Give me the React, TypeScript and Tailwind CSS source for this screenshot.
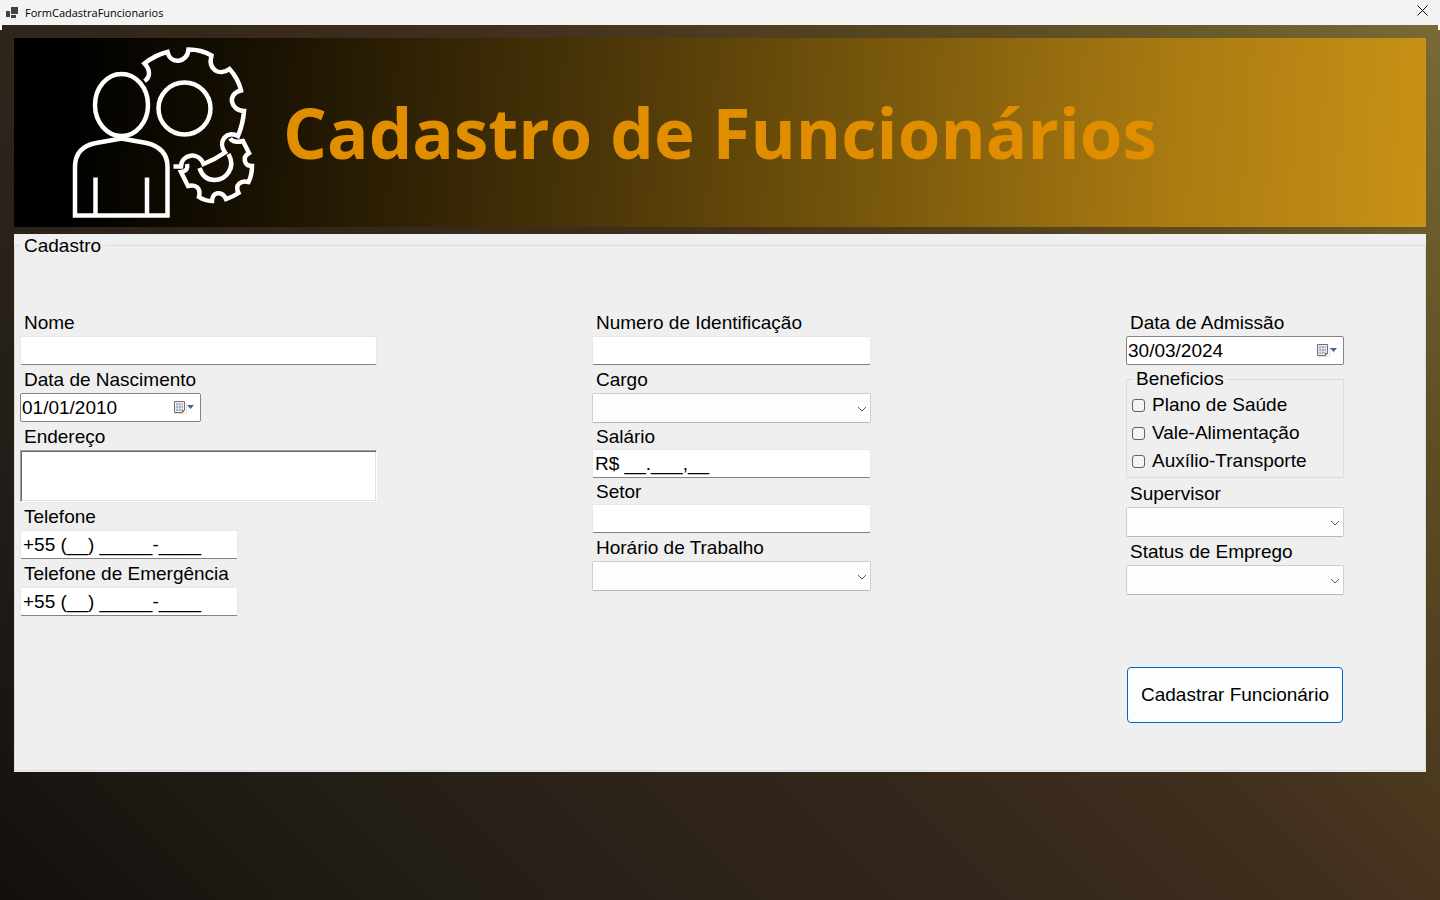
import type { ReactNode } from "react";

const boxText = "text-[19px] leading-6 text-black";

function Field({ id, label, compact = false, children }: { id: string; label: string; compact?: boolean; children: ReactNode }) {
  return (
    <div className="flex flex-col items-start">
      <label htmlFor={id} className={`flex items-center pt-px pl-1 text-[19px] leading-6 ${compact ? "h-[26px]" : "h-7"}`}>
        {label}
      </label>
      {children}
    </div>
  );
}

function TextBox({ id, value = "", width }: { id: string; value?: string; width: string }) {
  return (
    <input
      id={id}
      type="text"
      defaultValue={value}
      className={`h-[29px] rounded-xs border border-[#e8e8e8] border-b-[#828282] bg-white px-0.5 outline-none ${boxText} ${width}`}
    />
  );
}

function Combo({ id, width }: { id: string; width: string }) {
  return (
    <div className={`relative ${width}`}>
      <select
        id={id}
        defaultValue=""
        className={`block h-[30px] w-full appearance-none rounded-xs border border-[#cfcfcf] border-b-[#b8b8b8] bg-[#fdfdfd] px-1 outline-none ${boxText}`}
      >
        <option value=""></option>
      </select>
      <svg className="pointer-events-none absolute top-3 right-1 h-2 w-2.5" viewBox="0 0 10 8" fill="none" stroke="#606060">
        <path d="M1 2l4 4 4-4" />
      </svg>
    </div>
  );
}

function DateBox({ id, value, width }: { id: string; value: string; width: string }) {
  return (
    <div className={`flex h-[29px] items-center rounded-xs border border-[#848484] bg-white pr-1 ${width}`}>
      <input id={id} type="text" defaultValue={value} className={`h-6 w-0 min-w-0 flex-1 bg-transparent px-px outline-none ${boxText}`} />
      <button type="button" aria-label="Abrir calendário" className="shrink-0">
        <svg className="h-[15px] w-[23px]" viewBox="0 0 23 15">
          <path d="M2 13h11V4h1v9l-1 1H2z" fill="#e4dede" />
          <path d="M1.500 1.500h10v9l-2 2h-8z" fill="#f4f2f2" stroke="#7d6a68" />
          <rect x="3" y="3" width="7" height="8" fill="#a9b5ca" />
          <path d="M3 5.500h7M3 8.500h7M5.500 3v8M8.500 3v8" stroke="#e4e8f0" strokeWidth=".7" />
          <path d="M9 12.500v-2.500h2.500z" fill="#7d6a68" />
          <path d="M14 5h7l-3.500 4z" fill="#41619c" />
        </svg>
      </button>
    </div>
  );
}

function Check({ label }: { label: string }) {
  return (
    <label className="flex h-7 items-center gap-[7px] text-[19px] leading-6">
      <input type="checkbox" className="size-[13px] appearance-none rounded-[3px] border border-[#626262] bg-[#f4f4f4] checked:bg-[#0067c0]" />
      {label}
    </label>
  );
}

function EmployeeGears() {
  return (
    <svg className="h-[189px] w-[190px] shrink-0" viewBox="66 38 190 189" fill="none" stroke="#fff" strokeWidth="4.500">
      <ellipse cx="121.500" cy="105" rx="26.500" ry="31" />
      <path d="M121.500 138.500L96 143q-21 4-21 24v48.500h92.500V167q0-19-21-24z" />
      <path d="M95.500 177.500v37M147 177.500v37" />
      <circle cx="184.500" cy="108.500" r="26" />
      <path d="M144.500 81c6-4 6-11 0-17.500Q155 55 167.500 52c3 13 20 11 21-2.500q13 0 23 6c-4 14 8 21 18 13.500q9 10 11.500 21.500c-14 3-11 20 3 20.500q-1 13-6 25c-11-6-21 5-13 16.500q-10 7-21.500 11.500c-5-13-22-10-22.500 2.500h-7.500" />
      <path d="M230 138.500c3 4 7 4 13 2.500l6 12c-7 4-5 13 3 13q0 9-3.500 16c-8-2-14 3-10 11q-6 4-12.500 6c-4-9-14-7-14 2q-7 0-13-4c2-9-3-13-11-11l-7-14c6-1 7-4 6-8" />
      <path d="M228.500 154c8 14-3 26-14 26q-11 0-15-12" />
    </svg>
  );
}

export default function App() {
  return (
    <div className="flex min-h-screen flex-col bg-[#f3f3f3] font-['Liberation_Sans',Arial,sans-serif] text-black">
      <header className="flex h-[25px] shrink-0 items-center justify-between pr-3 pl-1.5">
        <div className="flex items-center gap-[7px]">
          <svg className="size-3" viewBox="0 0 12 12" fill="#424242">
            <path d="M5 0h7v7H5zM0 4h4v6H0zM5 8h5v3H5z" />
          </svg>
          <span className="font-['Open_Sans','Noto_Sans',sans-serif] text-[11px] leading-4">FormCadastraFuncionarios</span>
        </div>
        <button type="button" aria-label="Fechar" className="pb-1">
          <svg className="block size-[11px]" viewBox="0 0 11 11" stroke="#111" fill="none">
            <path d="M.5 .5l10 10M10.500 .5l-10 10" />
          </svg>
        </button>
      </header>

      <main className="relative flex flex-1 flex-col bg-[linear-gradient(45deg,#140f0b_0%,#211d16_17%,#2b221a_30%,#35281b_46%,#43301e_60%,#4f3e1f_70%,#5c4b22_80%,#786b36_100%)] px-3.5 pt-[13px]">
        <span className="absolute top-0 left-0 h-[5px] w-0.5 bg-white" />
        <span className="absolute top-0 right-0 h-[5px] w-0.5 bg-white" />
        <div className="flex h-[189px] items-center gap-[27px] bg-[linear-gradient(94deg,#000_4%,#1e1502_20%,#4a3508_41%,#7a590c_62%,#ab7b12_82%,#c99216_100%)] pl-[52px]">
          <EmployeeGears />
          <h1 className="font-['Open_Sans','Noto_Sans',sans-serif] text-[69px] leading-none font-bold whitespace-nowrap text-[#e08d00]">
            Cadastro de Funcionários
          </h1>
        </div>

        <form className="mt-[7px] bg-[#efefef] pb-px" onSubmit={(e) => e.preventDefault()}>
          <fieldset className="h-[537px] min-w-0 border border-[#dcdcdc] pr-[81px] pl-[5px]">
            <legend className="px-1 text-[19px] leading-[23px]">Cadastro</legend>
            <div className="mt-[51px] grid grid-cols-[572fr_534fr_218px] items-start">
              <div className="flex flex-col">
                <Field id="nome" label="Nome">
                  <TextBox id="nome" width="w-[357px]" />
                </Field>
                <Field id="nascimento" label="Data de Nascimento">
                  <DateBox id="nascimento" value="01/01/2010" width="w-[181px]" />
                </Field>
                <Field id="endereco" label="Endereço">
                  <textarea
                    id="endereco"
                    className={`block h-[52px] w-[357px] resize-none border border-[#a0a0a0] border-r-white border-b-white bg-white px-0.5 shadow-[inset_1px_1px_0_#696969,inset_-1px_-1px_0_#e3e3e3] outline-none ${boxText}`}
                  />
                </Field>
                <Field id="telefone" label="Telefone">
                  <TextBox id="telefone" value="+55 (__) _____-____" width="w-[218px]" />
                </Field>
                <Field id="emergencia" label="Telefone de Emergência">
                  <TextBox id="emergencia" value="+55 (__) _____-____" width="w-[218px]" />
                </Field>
              </div>

              <div className="flex flex-col">
                <Field id="identificacao" label="Numero de Identificação">
                  <TextBox id="identificacao" width="w-[279px]" />
                </Field>
                <Field id="cargo" label="Cargo">
                  <Combo id="cargo" width="w-[279px]" />
                </Field>
                <Field id="salario" label="Salário" compact>
                  <TextBox id="salario" value="R$ __.___,__" width="w-[279px]" />
                </Field>
                <Field id="setor" label="Setor" compact>
                  <TextBox id="setor" width="w-[279px]" />
                </Field>
                <Field id="horario" label="Horário de Trabalho">
                  <Combo id="horario" width="w-[279px]" />
                </Field>
              </div>

              <div className="flex flex-col">
                <Field id="admissao" label="Data de Admissão">
                  <DateBox id="admissao" value="30/03/2024" width="w-[218px]" />
                </Field>
                <fieldset className="mt-0.5 mb-px h-[111px] border border-[#dcdcdc] pl-[5px]">
                  <legend className="ml-px px-[3px] text-[19px] leading-6">Beneficios</legend>
                  <Check label="Plano de Saúde" />
                  <Check label="Vale-Alimentação" />
                  <Check label="Auxílio-Transporte" />
                </fieldset>
                <Field id="supervisor" label="Supervisor">
                  <Combo id="supervisor" width="w-[218px]" />
                </Field>
                <Field id="status" label="Status de Emprego">
                  <Combo id="status" width="w-[218px]" />
                </Field>
                <button type="submit" className="mx-px mt-[72px] h-14 rounded-sm border border-[#0067c0] bg-[#fdfdfd] text-[19px] leading-6">
                  Cadastrar Funcionário
                </button>
              </div>
            </div>
          </fieldset>
        </form>
      </main>
    </div>
  );
}
